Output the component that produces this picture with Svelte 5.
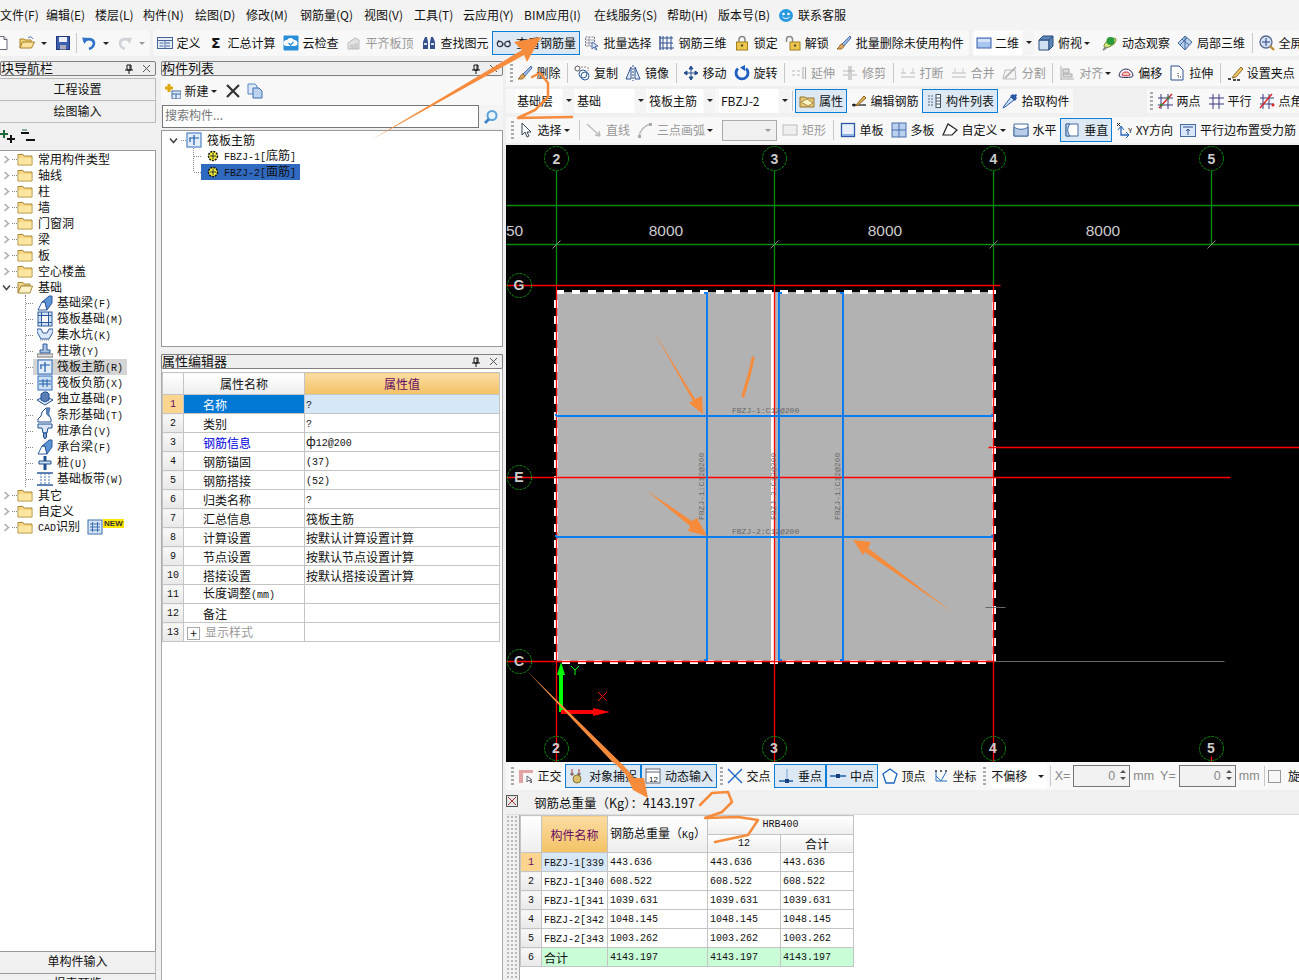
<script>
const I = {
  doc:'<path d="M3 1.500h7l3 3v10H3z" fill="#fff" stroke="#667"/><path d="M10 1.500v3h3" fill="#dde" stroke="#667"/>',
  open:'<path d="M1 13V4h4l1 1h6v2" fill="#f4d47c" stroke="#a87f24"/><path d="M1 13l2.500-6h12l-3 6z" fill="#f9e39f" stroke="#a87f24"/><path d="M9 3c2-2 4-1 5 1" fill="none" stroke="#3a6db5"/>',
  save:'<rect x="1.500" y="1.500" width="13" height="13" fill="#3b5fb0" stroke="#23397a"/><rect x="4" y="2" width="8" height="5" fill="#eef"/><rect x="5" y="10" width="6" height="4.500" fill="#aab"/>',
  undo:'<path d="M3 7c2-4 9-4 10 1 0 3-2 5-5 6" fill="none" stroke="#2f74c8" stroke-width="2.600"/><path d="M1 2.500l6 .5-3.500 6z" fill="#2f74c8"/>',
  redo:'<path d="M13 7C11 3 4 3 3 8c0 3 2 5 5 6" fill="none" stroke="#d0d4d8" stroke-width="2.600"/><path d="M15 2.500l-6 .5 3.500 6z" fill="#d0d4d8"/>',
  define:'<rect x=".5" y="2.500" width="15" height="11" fill="#e6eefa" stroke="#46639a"/><path d="M.5 5.500h15M2.500 8h4M2.500 11h4M9 8h4M9 11h4M8 5.500v8" stroke="#46639a" fill="none"/>',
  sigma:'<text x="3" y="13" font-size="14" font-weight="700" fill="#111" font-family="DejaVu Sans">Σ</text>',
  cloud:'<rect x=".5" y=".5" width="15" height="15" rx="1" fill="#2a8fd8"/><path d="M3 11a3 3 0 0 1 1-6 4 4 0 0 1 7 0 3 3 0 0 1 1 6z" fill="#fff"/><path d="M5.500 8l2 2 3-3" fill="none" stroke="#2a8fd8" stroke-width="1.300"/>',
  flat:'<path d="M2 14V8l7-5 4 2v9z" fill="#e2e2e2" stroke="#bbb"/><path d="M5 14v-4h2v4M9 14V9h2v5" stroke="#bbb" fill="none"/>',
  binoc:'<path d="M2 14V7l2-5h2l1 5v7zM14 14V7l-2-5h-2L9 7v7z" fill="#36508c"/><path d="M3 9h3M10 9h3" stroke="#cfdcf2" stroke-width="2"/>',
  glasses:'<circle cx="4" cy="9" r="2.700" fill="none" stroke="#334" stroke-width="1.200"/><circle cx="11.500" cy="9" r="2.700" fill="none" stroke="#334" stroke-width="1.200"/><path d="M6.700 9h2M1 8l2-3M14 8l-1-3" stroke="#334" fill="none"/>',
  batch:'<path d="M1.500 2h9v9h-9z" fill="#fff" stroke="#778" stroke-dasharray="2 1"/><path d="M1.500 5h9M1.500 8h9M5 2v9" stroke="#99a" fill="none"/><path d="M8 7l6 4-3 .5 2 3-1 .5-2-3-2 2z" fill="#dfe9f7" stroke="#4a6ea8"/>',
  r3d:'<path d="M1 3h13M1 8h13M2 13h13M4 1v14M8 1v14M12 1v14" stroke="#2f4f8f" fill="none"/><path d="M1 1v14" stroke="#2f4f8f" stroke-width="1.400"/>',
  lock:'<path d="M5 7V4.500a3 3 0 0 1 6 0V7" fill="none" stroke="#888" stroke-width="1.500"/><rect x="2.500" y="7" width="11" height="8" fill="#eec64e" stroke="#a0801e"/><circle cx="8" cy="10.500" r="1.200" fill="#553"/>',
  unlock:'<path d="M1.500 7V4.500a3 3 0 0 1 6 0V7" fill="none" stroke="#888" stroke-width="1.500"/><rect x="5" y="7" width="10" height="8" fill="#eec64e" stroke="#a0801e"/><circle cx="10" cy="10.500" r="1.200" fill="#553"/>',
  brush:'<path d="M14 1L6 9l2 2 7-8z" fill="#9fb8e8" stroke="#4a6ea8"/><path d="M6 9c-2 0-2 2-3 3l-2 2h4c2-1 3-2 3-3z" fill="#e0a35c" stroke="#9a6a2a"/>',
  v2d:'<rect x="1" y="3" width="14" height="10" fill="#a8c4f0" stroke="#3860a8"/><rect x="2" y="4" width="12" height="3" fill="#d4e2f8"/>',
  cube:'<path d="M1 5h10v10H1z" fill="#cfe0f2" stroke="#2a4a7a"/><path d="M1 5l4-4h10l-4 4zM11 5l4-4v10l-4 4z" fill="#5e88bc" stroke="#2a4a7a"/>',
  orbit:'<ellipse cx="8" cy="8" rx="7" ry="3" transform="rotate(-35 8 8)" fill="#dbe87c" stroke="#6a8a20"/><circle cx="8.500" cy="6" r="4" fill="#2a9a3a"/><path d="M1 15l4-3" stroke="#888" stroke-width="2"/>',
  part:'<path d="M8 1l7 6-7 8-7-7z" fill="#b8d0ee" stroke="#456a9c"/><path d="M5 4l7 6M10 3L3 10M8 1v14" stroke="#456a9c" fill="none"/>',
  zoomall:'<circle cx="7" cy="7" r="6" fill="#d6e2f4" stroke="#56688a" stroke-width="1.300"/><path d="M7 3v8M3 7h8" stroke="#24418a"/><path d="M11 11l4 4" stroke="#c09030" stroke-width="2.400"/>',
  copy:'<circle cx="3.500" cy="3.500" r="2.500" fill="none" stroke="#555"/><circle cx="11" cy="11" r="4" fill="none" stroke="#2f5f9f"/><circle cx="9" cy="9" r="4" fill="none" stroke="#2f5f9f"/><path d="M7 2h5M14 2v4" stroke="#888" fill="none" stroke-dasharray="2 1"/>',
  mirror:'<path d="M6 2v12H1zM10 2v12h5z" fill="#e3edf9" stroke="#2f5090"/><path d="M8 0v16" stroke="#2f5090" stroke-dasharray="2 1"/>',
  move:'<path d="M8 1v14M1 8h14M8 1L6 4h4zM8 15l-2-3h4zM1 8l3-2v4zM15 8l-3-2v4z" fill="#27508f" stroke="#27508f"/>',
  rotate:'<path d="M4 3.500a6 6 0 1 0 8 0" fill="none" stroke="#1f5fc4" stroke-width="2.800"/><path d="M8 0v6L3 2.500z" fill="#1f5fc4" transform="translate(3 0)"/>',
  extend:'<path d="M1 6h3M1 10h3M6 6h3M6 10h3" stroke="#bbb" fill="none"/><path d="M12 2v12M14.500 2v12" stroke="#aaa" fill="none"/>',
  trim:'<path d="M1 6h12M1 10h5M10 10h5" stroke="#bbb" fill="none"/><path d="M7 1v14M9 1v14" stroke="#aaa" fill="none"/>',
  brk:'<path d="M1 8h5M10 8h5M1 12h14" stroke="#bbb" fill="none"/><path d="M3 3v5M13 3v5" stroke="#ccc"/>',
  merge:'<path d="M1 8h14M1 12h14" stroke="#bbb" fill="none"/><path d="M4 3v5M12 3v5" stroke="#ccc"/>',
  split:'<path d="M1 14h13L13 5H3z" fill="#f4f4f4" stroke="#bbb"/><path d="M3 13l11-11" stroke="#aaa" stroke-width="1.500"/>',
  alignl:'<path d="M2 1v14M2 14h13" stroke="#aaa" fill="none"/><rect x="4" y="4" width="6" height="4" fill="#ddd" stroke="#aaa"/><rect x="4" y="9" width="9" height="3" fill="#ddd" stroke="#aaa"/>',
  offset:'<path d="M1 11a7 7 0 0 1 14 0c0 2-14 2-14 0z" fill="#eef" stroke="#335"/><path d="M4 10c0-4 8-4 8 0 0 1-8 1-8 0z" fill="#f6c8c0" stroke="#c33"/>',
  stretch:'<path d="M2 1h8l4 4v10H2z" fill="#fff" stroke="#2f4f8f"/><path d="M9 8v4h3" stroke="#333" stroke-dasharray="1 1" fill="none"/>',
  pencil:'<path d="M14 2L7 10l-2 3 4-1 7-8z" fill="#f2c66a" stroke="#8a6a22"/><path d="M1 14h3M6 15h3M10 15h3" stroke="#111" stroke-width="1.500"/>',
  prop:'<path d="M1 4h5l1 1h8v9H1z" fill="#e5c778" stroke="#94752a"/><path d="M2 9l6-3 6 4-5 3z" fill="#fff3c8" stroke="#a8904a"/>',
  edit:'<path d="M1 12h14" stroke="#222" stroke-width="1.300"/><path d="M5 12l8-9 2 2-9 8z" fill="#e4b65a" stroke="#8a6020"/><circle cx="3" cy="12" r="1.500" fill="#222"/>',
  list:'<rect x="10" y="1.500" width="4.500" height="13" fill="#fff" stroke="#456"/><path d="M10 5h4.500M10 8h4.500M10 11h4.500" stroke="#456"/><path d="M2 3h5M2 6h5M2 9h5M2 12h5" stroke="#567" stroke-dasharray="2 1"/>',
  drop:'<path d="M9 4l-7 9-1 2 2-1 9-7z" fill="#cfe2fb" stroke="#2a58a8"/><path d="M8 3l5 5 2-3-1-1 1-2-1-1-2 1-1-1z" fill="#2a58a8"/>',
  twop:'<path d="M4 1v15M11 1v15M1 5h15M1 12h15" stroke="#3b3b82" fill="none"/><path d="M2 15L15 1" stroke="#c22" stroke-width="1.300"/><circle cx="4.500" cy="12" r="1.500" fill="#3a8a3a"/><circle cx="11" cy="5" r="1.500" fill="#3a8a3a"/>',
  para:'<path d="M5 1v15M11 1v15M1 5h15M1 11h15" stroke="#3b3b82" fill="none"/>',
  pang:'<path d="M4 1v15M10 1v15M1 5h14M1 11h14" stroke="#3b3b82" fill="none"/><path d="M1 15L13 1" stroke="#d22" stroke-width="1.400"/><circle cx="14" cy="12" r="1.500" fill="#d22"/>',
  cursor:'<path d="M4 1v12l3-3 2 5 2-1-2-4h4z" fill="#fff" stroke="#345"/>',
  line:'<path d="M1 2l13 12M14 14l-5-1M14 14l-1-5" stroke="#bbb" stroke-width="1.300" fill="none"/>',
  arc:'<path d="M2 15C3 8 7 4 13 2" stroke="#bbb" stroke-width="1.500" fill="none"/><rect x="1" y="13" width="3" height="3" fill="#aaa"/><rect x="12" y="1" width="3" height="3" fill="#aaa"/>',
  rect:'<rect x="1" y="3" width="14" height="10" fill="#eee" stroke="#bbb"/>',
  single:'<rect x="1.500" y="1.500" width="13" height="13" fill="#e8f0fb" stroke="#2c59a6" stroke-width="1.300"/><path d="M2 13h12" stroke="#8fb2e6" stroke-width="2"/>',
  multi:'<rect x="1" y="1" width="14" height="14" fill="#b9d0ee" stroke="#4a71ac"/><path d="M8 1v14M1 8h14" stroke="#4a71ac"/>',
  custom:'<path d="M1 13L6 2l9 6-5 5z" fill="#fff" stroke="#222" stroke-width="1.200"/>',
  horiz:'<path d="M1 2h14v12H1z" fill="#fff" stroke="#456c9f"/><path d="M1 5c4 3 10 3 14 0v9H1z" fill="#b7cdea" stroke="#456c9f"/>',
  vert:'<path d="M2 2h12v12H2z" fill="#fff" stroke="#456c9f"/><path d="M6 2c-3 4-3 8 0 12H2V2z" fill="#b7cdea" stroke="#456c9f"/>',
  xy:'<path d="M5 5v8h7" stroke="#2763b8" stroke-width="1.300" fill="none"/><path d="M2 8l3-4 3 4M10 10l3 3-3 3" stroke="#2763b8" fill="none"/><path d="M1 1l3 3M4 1L1 4" stroke="#222"/><text x="12" y="11" font-size="7" font-family="Liberation Sans">Y</text>',
  edge:'<rect x=".5" y="2.500" width="15" height="12" fill="#dbe6f6" stroke="#456c9f"/><path d="M3 5h10M8 13V7M6 9l2-2 2 2" stroke="#2f4f8f" fill="none"/>',
  ortho:'<path d="M1 2h14v3H5v10H1z" fill="#e1a3a3"/><path d="M9 8v6l2-2 2 3 1-1-2-2h2z" fill="#fff" stroke="#667"/>',
  snap:'<path d="M3 1v7M10 1v7" stroke="#a33"/><circle cx="8" cy="11" r="4" fill="#d8bd6a" stroke="#8a7430"/><path d="M1 6h4M8 6h4" stroke="#555"/>',
  dyn:'<rect x="1" y="1" width="14" height="14" fill="#fff" stroke="#667"/><path d="M1 4h14" stroke="#667"/><text x="4" y="14" font-size="8" fill="#111" font-family="Liberation Sans">12</text>',
  cross:'<path d="M1 1l14 14M15 1L1 15" stroke="#1c66c0" stroke-width="1.400"/>',
  perp:'<path d="M1 13h14" stroke="#1b5dab" stroke-width="1.500"/><path d="M9 1v12" stroke="#7aa6d8"/><rect x="7" y="11" width="4" height="4" fill="#1b3f80"/>',
  mid:'<path d="M0 8h16" stroke="#1b5dab" stroke-width="1.500"/><rect x="6" y="6" width="4" height="4" fill="#1b3f80"/>',
  vertex:'<path d="M8 1l7 5-3 9H4L1 6z" fill="#fff" stroke="#1c66c0" stroke-width="1.300"/>',
  coord:'<path d="M3 13h11M3 13V3M3 8l5 5 5-9" stroke="#2673c8" fill="none"/><circle cx="13" cy="3" r="1" fill="#333"/><circle cx="3" cy="3" r="1" fill="#333"/><circle cx="8" cy="3" r="1" fill="#333"/>',
  add:'<path d="M4 1v8M0 5h8" stroke="#dca90e" stroke-width="3"/><rect x="7" y="8" width="9" height="8" fill="#dce8f7" stroke="#456c9f"/><path d="M7 11h9M11 11v5" stroke="#456c9f"/>',
  x:'<path d="M2 2l12 12M14 2L2 14" stroke="#333" stroke-width="2.200"/>',
  cp:'<path d="M1 1h7l2 2v8H1z" fill="#dbe8f8" stroke="#5b86c4"/><path d="M6 5h6l3 3v7H6z" fill="#bcd3f0" stroke="#3d6cb2"/>',
  search:'<circle cx="9" cy="6.500" r="4.500" fill="#eaf4fd" stroke="#5aa3dd" stroke-width="2"/><path d="M6 10l-4 4" stroke="#3a85c9" stroke-width="2.600"/>',
  qq:'<ellipse cx="8" cy="8.500" rx="7" ry="6.500" fill="#2a9ae0"/><circle cx="5.500" cy="7" r="1.300" fill="#fff"/><circle cx="10.500" cy="7" r="1.300" fill="#fff"/><path d="M4.500 10c2 2 5 2 7 0" stroke="#fff" fill="none"/>',
  plus:'<path d="M4 1v8M0 5h8" stroke="#1d6b3d" stroke-width="2"/><path d="M11 6v8M7 10h8" stroke="#111" stroke-width="2"/>',
  minus:'<path d="M1 4h8M6 11h9" stroke="#111" stroke-width="2"/><path d="M2 1h5" stroke="#1d6b3d"/>',
  folder:'<path d="M1 3.500h5l1 1.500h8v9H1z" fill="#f6d67e" stroke="#a88a3c"/><path d="M1.500 7h13v6.500h-13z" fill="#fbe5a0"/>',
  folderO:'<path d="M1 3.500h5l1 1.500h6v2H4L1 14z" fill="#f0d58c" stroke="#a88a3c"/><path d="M4 7h11.500L13 14H1z" fill="#fdf0c4" stroke="#a88a3c"/>',
  beam:'<path d="M1 15l4-8h3l2 8z" fill="#fff" stroke="#2c5a9c"/><path d="M5 7l7-6h3v7l-5 7-2-8z" fill="#5b92d3" stroke="#2c5a9c"/>',
  raft:'<rect x="1" y="1" width="14" height="14" fill="#cfe0f5" stroke="#2c5a9c"/><rect x="4.500" y="4.500" width="7" height="7" fill="#fff" stroke="#2c5a9c"/><path d="M1 4.500h14M1 11.500h14M4.500 1v14M11.500 1v14" stroke="#2c5a9c"/>',
  pit:'<path d="M0 2h4l2 4h4l2-4h4v3l-4 7H4L0 5z" fill="#d8e6f7" stroke="#2c5a9c"/><path d="M3 13h10" stroke="#888" stroke-dasharray="1 1"/>',
  pier:'<path d="M6 1h4v6h3v3H3V7h3z" fill="#a9c1e2" stroke="#2c5a9c"/><path d="M0 11h16v3H0z" fill="#e6e6e6" stroke="#777"/>',
  main:'<rect x="1" y="1" width="14" height="14" fill="#e4eefb" stroke="#2e6dbb"/><path d="M3 6h10M8 3v10M4 6v4" stroke="#1c5cab" stroke-width="1.200" fill="none"/>',
  neg:'<rect x="1" y="1" width="14" height="14" fill="#cfe0f5" stroke="#2e6dbb"/><path d="M2 6h12M2 9h12M6 4v8M10 4v8" stroke="#1c5cab" fill="none"/>',
  found:'<path d="M0 9l8-4 8 4-8 5z" fill="#e1ecfa" stroke="#1e4f90"/><path d="M4 9V3l3-2h3l2 2v6l-4 2z" fill="#587fb6" stroke="#1e4f90"/>',
  strip:'<path d="M1 15v-3l3-3 1-4 4-4h4l-2 5 3 6v3z" fill="#fff" stroke="#1e4f90"/><path d="M9 1h4l-1 9-3-3z" fill="#587fb6"/>',
  cap:'<path d="M1 1h14v4H11l-1 5H6L5 5H1z" fill="#d9e5f5" stroke="#1e4f90"/><path d="M6.500 10h3v4l-1.500 2-1.500-2z" fill="#7a9cc8" stroke="#1e4f90"/>',
  pile:'<path d="M8 1v14" stroke="#1e4f90" stroke-width="3"/><path d="M2 6h12v3H2z" fill="#cfe0f5" stroke="#1e4f90"/>',
  strap:'<path d="M0 2h16M0 14h16" stroke="#2c5a9c" stroke-width="1.400"/><path d="M4 2v12M8 2v12M12 2v12" stroke="#4a7cc0" stroke-dasharray="2 1"/>',
  gear:'<circle cx="8" cy="8" r="4.500" fill="#f4ef3a" stroke="#111" stroke-width="1.500" stroke-dasharray="2 1"/><path d="M5 8h6M8 5v6" stroke="#333"/>',
  cadb:'<rect x="1" y="1" width="14" height="14" fill="#d5e4f7" stroke="#3d6fae"/><path d="M5.500 3v10M10.500 3v10M3 5h10M3 8h10M3 11h10" stroke="#3d6fae"/>'
};

const menus = [['文件(F)',36],['编辑(E)',39],['楼层(L)',38],['构件(N)',42],['绘图(D)',41],['修改(M)',44],['钢筋量(Q)',54],['视图(V)',40],['工具(T)',39],['云应用(Y)',51],['BIM应用(I)',60],['在线服务(S)',63],['帮助(H)',41],['版本号(B)',52]];

const S = {sep:true}, G = {grip:true};
const row1b = [
  {i:'define',t:'定义'},{i:'sigma',t:'汇总计算'},{i:'cloud',t:'云检查'},{i:'flat',t:'平齐板顶',d:1},{i:'binoc',t:'查找图元'},
  {i:'glasses',t:'查看钢筋量',a:1},{i:'batch',t:'批量选择'},{i:'r3d',t:'钢筋三维'},{i:'lock',t:'锁定'},{i:'unlock',t:'解锁'},{i:'brush',t:'批量删除未使用构件'}
];
const row1c = [
  {i:'cube',t:'俯视',c:1,x:1},{i:'orbit',t:'动态观察'},{i:'part',t:'局部三维'},S,{i:'zoomall',t:'全屏'}
];
const row2 = [
  G,{i:'brush',t:'删除'},S,{i:'copy',t:'复制'},{i:'mirror',t:'镜像'},S,{i:'move',t:'移动'},{i:'rotate',t:'旋转'},S,
  {i:'extend',t:'延伸',d:1},{i:'trim',t:'修剪',d:1},S,{i:'brk',t:'打断',d:1},{i:'merge',t:'合并',d:1},{i:'split',t:'分割',d:1},S,
  {i:'alignl',t:'对齐',d:1,c:1},{i:'offset',t:'偏移'},{i:'stretch',t:'拉伸'},S,{i:'pencil',t:'设置夹点'}
];
const row3a = [{i:'prop',t:'属性',a:1},{i:'edit',t:'编辑钢筋'},{i:'list',t:'构件列表',a:1},{i:'drop',t:'拾取构件'}];
const row3b = [G,{i:'twop',t:'两点'},{i:'para',t:'平行'},{i:'pang',t:'点角'}];
const row4a = [G,{i:'cursor',t:'选择',c:1,x:1},S,{i:'line',t:'直线',d:1},{i:'arc',t:'三点画弧',d:1,c:1}];
const row4b = [{i:'rect',t:'矩形',d:1},S,{i:'single',t:'单板'},{i:'multi',t:'多板'},{i:'custom',t:'自定义',c:1},{i:'horiz',t:'水平'},{i:'vert',t:'垂直',a:1},{i:'xy',t:'XY方向'},{i:'edge',t:'平行边布置受力筋'}];
const snapA = [G,{i:'ortho',t:'正交'},{i:'snap',t:'对象捕捉',a:1},{i:'dyn',t:'动态输入',a:1},G,{i:'cross',t:'交点'},{i:'perp',t:'垂点',a:1},{i:'mid',t:'中点',a:1},{i:'vertex',t:'顶点'},{i:'coord',t:'坐标'},G];
const combos = [{t:'基础层',w:47},{t:'基础',w:59},{t:'筏板主筋',w:56},{t:'FBZJ-2',w:59}];

const top1 = ['常用构件类型','轴线','柱','墙','门窗洞','梁','板','空心楼盖'];
const kids = [['beam','基础梁(F)'],['raft','筏板基础(M)'],['pit','集水坑(K)'],['pier','柱墩(Y)'],['main','筏板主筋(R)'],['neg','筏板负筋(X)'],['found','独立基础(P)'],['strip','条形基础(T)'],['cap','桩承台(V)'],['beam','承台梁(F)'],['pile','桩(U)'],['strap','基础板带(W)']];

const props = [
  ['名称','?'],['类别','?'],['钢筋信息','ф12@200'],['钢筋锚固','(37)'],['钢筋搭接','(52)'],['归类名称','?'],['汇总信息','筏板主筋'],
  ['计算设置','按默认计算设置计算'],['节点设置','按默认节点设置计算'],['搭接设置','按默认搭接设置计算'],['长度调整(mm)',''],['备注',''],['显示样式','']
];
const weights = [
  ['FBZJ-1[339','443.636'],['FBZJ-1[340','608.522'],['FBZJ-1[341','1039.631'],['FBZJ-2[342','1048.145'],['FBZJ-2[343','1003.262'],['合计','4143.197']
];
const runs = s => s.match(/[\x20-\x7e]+|[^\x20-\x7e]+/g) || [];
const isA = r => /^[\x20-\x7e]/.test(r);

const axes = [[556,'2'],[774,'3'],[993,'4'],[1211,'5']];
const dims = [[666,'8000'],[885,'8000'],[1103,'8000']];
</script>

{#snippet ic(n)}<svg class="ic" width="16" height="16" viewBox="0 0 16 16">{@html I[n]}</svg>{/snippet}
{#snippet caret()}<span class="caret"></span>{/snippet}
{#snippet mix(t)}{#each runs(t) as r}{#if isA(r)}<span class="m">{r}</span>{:else}{r}{/if}{/each}{/snippet}
{#snippet tools(list)}
  {#each list as it}
    {#if it.sep}<span class="sep"></span>
    {:else if it.grip}<span class="grip"></span>
    {:else}
      <span class="tool" class:dis={it.d} class:act={it.a} class:wide={it.x}>
        {@render ic(it.i)}<span>{it.t}</span>{#if it.c}{@render caret()}{/if}
      </span>
    {/if}
  {/each}
{/snippet}
{#snippet phead(title)}
  <div class="phead"><span class="ptitle">{title}</span>
    <svg class="pin" width="10" height="10" viewBox="0 0 10 10"><path d="M3 1h4v5H3zM1 6h8M5 6v4M6 1v5" stroke="#111" fill="none"/></svg>
    <svg class="close" width="9" height="9" viewBox="0 0 9 9"><path d="M1 1l7 7M8 1L1 8" stroke="#555" fill="none"/></svg>
  </div>
{/snippet}
{#snippet chev(open)}
  <svg class="chev" width="9" height="9" viewBox="0 0 9 9">
    {#if open}<path d="M1 2.500l3.500 4 3.500-4" stroke="#444" stroke-width="1.500" fill="none"/>
    {:else}<path d="M2.500 1l4 3.500-4 3.500" stroke="#aaa" stroke-width="1.500" fill="none"/>{/if}
  </svg>
{/snippet}

<div class="app">
  <nav class="menu">
    {#each menus as m}<span style:width="{m[1]}px">{m[0]}</span>{/each}
    <span class="svc">{@render ic('qq')}联系客服</span>
  </nav>

  <div class="row1">
    <div class="bar first">
      <span class="plain lead">{@render ic('doc')}</span>
      <span class="plain">{@render ic('open')}{@render caret()}</span>
      <span class="plain sv">{@render ic('save')}</span>
      <span class="sep"></span>
      <span class="plain un">{@render ic('undo')}{@render caret()}</span>
      <span class="plain">{@render ic('redo')}<span class="caret lite"></span></span>
    </div>
    <div class="bar second">{@render tools(row1b)}</div>
    <div class="bar third">
      <span class="combo c2d">{@render ic('v2d')}<span>二维</span><i class="arrowbox"></i></span>
      {@render tools(row1c)}
    </div>
  </div>

  <div class="main">
    <aside class="left">
      {@render phead('模块导航栏')}
      <div class="navbtn first">工程设置</div>
      <div class="navbtn">绘图输入</div>
      <div class="treebar">
        <svg width="16" height="16" viewBox="0 0 16 16">{@html I.plus}</svg>
        <svg width="16" height="16" viewBox="0 0 16 16">{@html I.minus}</svg>
      </div>
      <div class="tree">
        {#each top1 as t}
          <div class="tr">{@render chev(false)}<i class="dot"></i>{@render ic('folder')}<span class="tt">{t}</span></div>
        {/each}
        <div class="tr">{@render chev(true)}<i class="dot"></i>{@render ic('folderO')}<span class="tt">基础</span></div>
        <div class="kids">
          {#each kids as k}
            <div class="kr"><i class="dot2"></i><span class="kw" class:sel={k[1]==='筏板主筋(R)'}>{@render ic(k[0])}<span>{@render mix(k[1])}</span></span></div>
          {/each}
        </div>
        {#each ['其它','自定义'] as t}
          <div class="tr">{@render chev(false)}<i class="dot"></i>{@render ic('folder')}<span class="tt">{t}</span></div>
        {/each}
        <div class="tr">{@render chev(false)}<i class="dot"></i>{@render ic('folder')}<span class="tt">{@render mix('CAD识别')}</span>{@render ic('cadb')}<span class="newb">NEW</span></div>
      </div>
      <div class="navbtn bottom">单构件输入</div>
      <div class="navbtn bottom">报表预览</div>
    </aside>

    <section class="mid">
      {@render phead('构件列表')}
      <div class="midbar">
        <span class="tool">{@render ic('add')}<span>新建</span>{@render caret()}</span>
        <span class="plain mx">{@render ic('x')}</span>
        <span class="plain">{@render ic('cp')}</span>
      </div>
      <div class="searchrow"><div class="search">搜索构件...</div><span class="sicon">{@render ic('search')}</span></div>
      <div class="comp">
        <div class="cr top">{@render chev(true)}<i class="dot sm"></i>{@render ic('main')}<span class="tt">筏板主筋</span></div>
        <div class="compkids">
          <div class="cr"><i class="dot2"></i><span class="cw">{@render ic('gear')}<span>{@render mix('FBZJ-1[底筋]')}</span></span></div>
          <div class="cr"><i class="dot2"></i><span class="cw on">{@render ic('gear')}<span>{@render mix('FBZJ-2[面筋]')}</span></span></div>
        </div>
      </div>
      <div class="propwrap">
        {@render phead('属性编辑器')}
        <table class="ptable">
          <colgroup><col class="c0"><col class="c1"><col class="c2"></colgroup>
          <thead><tr><th></th><th>属性名称</th><th class="orange">属性值</th></tr></thead>
          <tbody>
            {#each props as p, n}
              <tr class:first={n===0}>
                <td class="no">{n+1}</td>
                <td class="nm" class:blue={n===2} class:grey={n===12}>{#if n===12}<span class="exp">+</span>{/if}{@render mix(p[0])}</td>
                <td class="vl">{@render mix(p[1])}</td>
              </tr>
            {/each}
          </tbody>
        </table>
      </div>
    </section>

    <section class="right">
      <div class="tb r2">{@render tools(row2)}</div>
      <div class="tb r3">
        <div class="grp">
          {#each combos as c}
            <span class="combo" style:width="{c.w}px"><span class="ctext">{c.t}</span><i class="arrowbox"></i></span>
          {/each}
          <span class="sep"></span>
          {@render tools(row3a)}
        </div>
        <div class="grp g2">{@render tools(row3b)}</div>
      </div>
      <div class="tb r4">
        {@render tools(row4a)}
        <span class="blank"><span class="caret grey"></span></span>
        {@render tools(row4b)}
      </div>

      <svg class="cad" width="793" height="617" viewBox="506 145 793 617">
        <rect x="506" y="145" width="793" height="617" fill="#000"/>
        <g transform="translate(.5 .5)" stroke-width="1.300">
          <path d="M506 205H1299M506 244H1299" stroke="#0a8a0a"/>
          {#each axes as a}
            <path d="M{a[0]} 170V{a[0]===1211?244:285}" stroke="#0a8a0a"/>
            <path d="M{a[0]-4} 248l8-8" stroke="#888" stroke-width="1"/>
            <circle cx={a[0]} cy="158" r="12" fill="#000" stroke="#0a8a0a" stroke-width="1" stroke-dasharray="3 1"/>
            <text class="bub" x={a[0]} y="163" text-anchor="middle">{a[1]}</text>
          {/each}
        </g>
        {#each dims as d}<text class="dim" x={d[0]} y="236" text-anchor="middle">{d[1]}</text>{/each}
        <text class="dim" x="506" y="236">50</text>

        <rect x="556" y="292" width="438" height="370" fill="#b2b2b2"/>
        <rect x="556" y="292" width="438" height="370" fill="none" stroke="#fff" stroke-width="4" stroke-dasharray="8 8"/>
        <path d="M773 292V662" stroke="#fff" stroke-width="4"/>

        <g transform="translate(.5 .5)" stroke-width="1.300">
          <path d="M506 285H1000M506 477H1230M506 661H994" stroke="#f00"/>
          <path d="M556 285V762M774 285V762M993 285V762M1211 756V762M988 447H1299" stroke="#f00"/>
          <path d="M994 661H1224M985 607H1005" stroke="#666" stroke-width="1"/>
        </g>

        <path d="M707 292V661M779 292V661M843 292V661M556 416H993M556 537H993" stroke="#0a7cf0" stroke-width="2"/>
        <path d="M704 293H707M779 293H782M840 293H843M704 660H707M779 660H782M840 660H843M556 414V416M992 414V416M556 535V537M992 535V537" stroke="#0a7cf0" stroke-width="2"/>

        <text class="lab" x="732" y="413">FBZJ-1:C12@200</text>
        <text class="lab" x="732" y="534">FBZJ-2:C12@200</text>
        <text class="lab" transform="translate(704 520) rotate(-90)">FBZJ-1:C12@200</text>
        <text class="lab" transform="translate(776 520) rotate(-90)">FBZJ-2:C12@200</text>
        <text class="lab" transform="translate(840 520) rotate(-90)">FBZJ-1:C12@200</text>

        {#each [['G',285],['E',477],['C',661]] as g}
          <circle cx="519.500" cy={g[1]+.5} r="12" fill="none" stroke="#0a8a0a" stroke-dasharray="3 1"/>
          <text class="bub" x="519" y={g[1]+5} text-anchor="middle">{g[0]}</text>
        {/each}
        {#each axes as a}
          <circle cx={a[0]+.5} cy="748.500" r="12" fill="none" stroke="#0a8a0a" stroke-dasharray="3 1"/>
          <text class="bub" x={a[0]} y="753" text-anchor="middle">{a[1]}</text>
        {/each}

        <path d="M561 712V672" stroke="#0f0" stroke-width="4"/><path d="M561 662l-4 13h8z" fill="#0f0"/>
        <path d="M561 712H600" stroke="#f00" stroke-width="4"/><path d="M610 712l-17-4v8z" fill="#f00"/>
        <path d="M571 666l4 4 4-4M575 670v5" stroke="#0f0" fill="none"/>
        <path d="M598 692l9 9M607 692l-9 9" stroke="#f00"/>
      </svg>

      <div class="tb snap">
        {@render tools(snapA)}
        <span class="blank w"><span class="txt">不偏移</span><span class="caret"></span></span>
        <span class="sep"></span>
        <span class="lbl">X=</span>
        <span class="spin"><span>0</span><i></i></span>
        <span class="lbl">mm</span>
        <span class="lbl l2">Y=</span>
        <span class="spin"><span>0</span><i></i></span>
        <span class="lbl">mm</span>
        <span class="sep"></span>
        <span class="chk"></span>
        <span class="rot">旋转点</span>
      </div>

      <div class="bottom-panel">
        <div class="wtitle"><svg width="12" height="12" viewBox="0 0 12 12"><rect x=".5" y=".5" width="11" height="11" fill="#e6e6e6" stroke="#555"/><path d="M2 2l8 8M10 2L2 10" stroke="#a33"/></svg><span>钢筋总重量（Kg）：4143.197</span></div>
        <div class="wbody">
          <div class="dots"></div>
          <table class="wtable">
            <colgroup><col class="w0"><col class="w1"><col class="w2"><col class="w3"><col class="w4"></colgroup>
            <thead>
              <tr><th rowspan="2"></th><th rowspan="2" class="orange">构件名称</th><th rowspan="2" class="tl">钢筋总重量（<span class="m">Kg</span>）</th><th colspan="2" class="m">HRB400</th></tr>
              <tr><th class="m">12</th><th>合计</th></tr>
            </thead>
            <tbody>
              {#each weights as w, n}
                <tr class:total={n===5} class:first={n===0}>
                  <td class="no">{n+1}</td><td class="nmw">{@render mix(w[0])}</td>
                  <td class="num">{w[1]}</td><td class="num">{w[1]}</td><td class="num">{w[1]}</td>
                </tr>
              {/each}
            </tbody>
          </table>
        </div>
      </div>
    </section>
  </div>

  <svg class="notes" width="1299" height="980" viewBox="0 0 1299 980">
    <g fill="#f68b3c">
      <path d="M371 140L522 50 514 42 541 37 527 62 524 55z"/>
      <path d="M653 330L695 399 702 396 703 414 689 403 693 401z"/>
      <path d="M646 490L692 521 697 518 707 536 688 531 690 526z"/>
      <path d="M952 612L868 548 871 542 853 540 863 555 865 552z"/>
      <path d="M528 672L618 768 612 760 626 775 633 790 648 798 644 778 634 778 625 767z"/>
    </g>
    <g fill="none" stroke="#f68b3c" stroke-linecap="round" stroke-linejoin="round">
      <path d="M753 358L750 372 743 396" stroke-width="3"/>
      <path d="M532 77L540 73 548 83 548 97 535 110 518 118 572 117" stroke-width="2.500"/>
      <path d="M700 805L712 793 728 792 732 802 722 812 705 818 738 817 758 820 748 835 715 842" stroke-width="2.500"/>
    </g>
  </svg>
</div>

<style>
  :global(body){margin:0;background:#f0f0f0}
  .app{position:relative;width:1299px;height:980px;overflow:hidden;background:#f0f0f0;color:#111;font:12px/16px "Noto Sans CJK SC","Liberation Sans",sans-serif;display:flex;flex-direction:column}
  .ic{flex:none;display:block}
  i{font-style:normal;display:block}
  .menu{height:30px;display:flex;align-items:center;gap:10px;white-space:nowrap;background:#f3f3f3;flex:none}
  .menu>span{flex:none}
  .svc{display:flex;align-items:center;gap:4px;margin-left:-2px}
  .row1{height:30px;display:flex;flex:none;gap:3px}
  .bar{display:flex;align-items:center;height:26px;background:#f8f8f8;border-radius:3px;white-space:nowrap}
  .first.bar{width:150px;flex:none;overflow:hidden}
  .second{width:816px;flex:none}
  .third{flex:1;overflow:hidden;padding-left:2px}
  .plain{display:flex;align-items:center;gap:6px;margin-right:8px}
  .plain .caret{margin-left:0}
  .plain.lead{margin-left:-6px;margin-right:9px}
  .plain.sv{margin-right:2px}
  .plain.un{margin-left:1px}
  .sep{width:1px;height:20px;background:#c8c8c8;margin:0 2.500px 0 3px;flex:none}
  .grip{width:3px;height:18px;margin:0 0 0 3px;background:repeating-linear-gradient(#aaa 0 2px,transparent 2px 4px);flex:none}
  .tool{display:flex;align-items:center;gap:4px;padding:0 3.500px;height:100%;flex:none;box-sizing:border-box}
  .tool.dis{color:#999}
  .tool.act{border:1px solid #0a7ed6;background:#dce9f5;height:24px;padding:0 3px}
  .tool.wide{margin-right:5px}
  .caret{display:inline-block;width:0;height:0;border:3px solid transparent;border-top:3.500px solid #222;border-bottom:0;margin-left:-2px;flex:none}
  .caret.lite,.caret.grey{border-top-color:#999}
  .combo{display:flex;align-items:center;background:#fff;height:24px;position:relative;flex:none}
  .ctext{padding-left:2px;white-space:nowrap;overflow:hidden}
  .arrowbox{position:absolute;right:-12px;top:0;width:11px;height:24px;background:#f4f4f4}
  .arrowbox::after{content:"";position:absolute;left:3px;top:10px;border:3px solid transparent;border-top:3.500px solid #222;border-bottom:0}
  .c2d{width:46px;padding-left:2px;margin-right:12.500px;gap:3px}
  .main{flex:1;display:flex;min-height:0}
  .left{width:156px;flex:none;display:flex;flex-direction:column;padding-top:1px;box-sizing:border-box}
  .phead{height:13px;border:1px solid #808080;border-radius:2px;background:#eee;display:flex;align-items:center;font-size:13px;line-height:12px;overflow:hidden;flex:none}
  .ptitle{flex:1;white-space:nowrap;margin-top:-2px}
  .left .ptitle{margin-left:-13px}
  .pin{margin-right:8px}
  .close{margin-right:4px}
  .navbtn{height:21px;line-height:19px;text-align:center;border:1px solid #bbb;border-width:1px 1px 0 0;background:#f0f0f0;flex:none}
  .navbtn.first{margin-top:2px}
  .treebar{height:27px;display:flex;align-items:center;gap:4px;border-top:1px solid #bbb;flex:none}
  .tree{height:801px;flex:none;box-sizing:border-box;background:#fff;border:1px solid #999;border-width:1px 1px 0 0}
  .navbtn.bottom{height:21px;line-height:18px;border-top:1px solid #999}
  .tr{height:16px;display:flex;align-items:center}
  .chev{margin-left:2px;flex:none;width:9px}
  .dot{width:5px;border-top:1px dotted #888;flex:none;margin-left:1px}
  .dot.sm{width:5px;margin-left:3px}
  .tt{margin-left:5px;white-space:nowrap}
  .kids{margin-left:25px;border-left:1px dotted #888;height:192px}
  .kr{height:16px;display:flex;align-items:center}
  .dot2{width:7px;border-top:1px dotted #888;flex:none}
  .kw{display:flex;align-items:center;gap:4px;padding-left:4px;width:90px;height:16px;white-space:nowrap}
  .kw.sel{background:#d4d4d4}
  .m{font-family:"Liberation Mono",monospace;font-size:10px}
  .newb{font:700 8px/9px "Liberation Sans",sans-serif;background:#ffe600;color:#333;align-self:flex-start;padding:0 1px}
  .tr .tt+.ic{margin-left:7px}
  .mid{width:342px;flex:none;margin-left:5px;padding-top:1px;display:flex;flex-direction:column;box-sizing:border-box}
  .midbar{height:28px;display:flex;align-items:center;background:#f8f8f8;flex:none;margin-top:1px;padding-left:0}
  .midbar .plain{margin-right:6px}
  .midbar .plain.mx{margin-left:5px}
  .searchrow{display:flex;height:23px;margin-left:1px;flex:none}
  .search{flex:1;border:1px solid #777;background:#fff;color:#777;padding-left:2px;line-height:18px}
  .sicon{width:24px;display:flex;align-items:center;justify-content:center;background:#f4f4f4}
  .comp{height:217px;background:#fff;border:1px solid #999;margin-top:2px;box-sizing:border-box;padding-top:1px;flex:none}
  .cr{height:16px;display:flex;align-items:center}
  .cr.top{padding-left:5px}
  .compkids{margin-left:31px;border-left:1px dotted #888;height:23px}
  .cw{display:flex;align-items:center;gap:3px;width:95px;padding-left:4px;height:16px;white-space:nowrap}
  .cw.on{background:#2f69c0}
  .propwrap{flex:1;background:#fff;margin-top:7px;border-right:1px solid #aaa;border-left:1px solid #aaa}
  .propwrap .phead{margin-left:-1px;margin-right:-1px}
  .ptable{border-collapse:collapse;table-layout:fixed;width:337px;margin-top:3px;background:#fff}
  .c0{width:21px}.c1{width:121px}.c2{width:195px}
  .ptable th,.ptable td{border:1px solid #c4c4c4;height:18px;line-height:13px;padding:0;overflow:hidden;white-space:nowrap}
  .ptable th{height:21px;background:linear-gradient(#fff,#eee);font-weight:400}
  .ptable th.orange,.wtable th.orange{background:linear-gradient(#fbdca3,#f3c264);color:#660a66}
  .no{background:linear-gradient(#f8f8f8,#e8e8e8);text-align:center;font-family:"Liberation Mono",monospace;font-size:10px}
  .ptable .nm{padding-left:19px}
  .ptable .vl{padding-left:1px}
  .first .no{background:#fbd490;color:#660a66}
  .ptable .first .nm{background:#0078d4;color:#fff}
  .ptable .first .vl{background:#d6e8f8}
  .blue{color:#0000e0}
  .grey{color:#999}
  .exp{display:inline-block;width:11px;height:11px;line-height:10px;border:1px solid #aaa;color:#111;text-align:center;margin:0 5px 0 -16px;vertical-align:-1px}
  .right{flex:1;display:flex;flex-direction:column;margin-left:3px;min-width:0}
  .tb{display:flex;align-items:center;white-space:nowrap;flex:none;overflow:hidden}
  .r2{height:26px;background:#f8f8f8;margin-bottom:3px;padding-left:1px}
  .r3{height:24px;margin-bottom:4px}
  .grp{display:flex;align-items:center;height:24px;background:#f8f8f8;padding-left:9px;width:567px;box-sizing:border-box;flex:none;overflow:hidden}
  .r3 .combo{margin-right:13px}
  .r3 .combo:nth-child(3){margin-right:16px}
  .r3 .combo:nth-child(4){margin-right:14px}
  .r3 .g2{margin-left:74px;flex:1;padding-left:0;width:auto}
  .r3 .sep{margin:0 2px 0 0}
  .r4{height:26px;background:#f8f8f8;margin-bottom:2px;padding-left:2px}
  .r4 .tool.wide{margin-right:3px}
  .blank{display:flex;align-items:center;justify-content:flex-end;width:55px;height:21px;border:1px solid #aaa;margin:0 1.500px 0 5.500px;padding-right:5px;box-sizing:border-box;flex:none;background:#f0f0f0}
  .cad{display:block;flex:none}
  .snap{height:28px;background:#f8f8f8;padding-left:2px}
  .snap .blank.w{background:#fff;border:0;width:56px;justify-content:space-between;padding:0 3px 0 0;margin:0 0 0 5px;height:24px}
  .snap .blank.w .caret{margin-left:0}
  .lbl{color:#888;margin:0 1px;font-family:"Liberation Sans",sans-serif;font-size:12.500px;flex:none}
  .l2{margin-left:5px}
  .spin{width:57px;height:22px;box-sizing:border-box;border:1px solid #777;background:#f2f2f2;color:#888;display:flex;align-items:center;justify-content:flex-end;margin:0 2px;padding-right:14px;position:relative;flex:none;font-family:"Liberation Sans",sans-serif;font-size:12.500px}
  .spin i{position:absolute;right:3px;top:4px;width:0;height:0;border:3px solid transparent;border-bottom:3px solid #555;border-top:0}
  .spin i::after{content:"";position:absolute;left:-3px;top:7px;border:3px solid transparent;border-top:3px solid #555;border-bottom:0}
  .chk{width:11px;height:11px;border:1px solid #999;flex:none;margin:0 7px 0 1px}
  .rot{flex:none}
  .bottom-panel{flex:1;background:#fff;display:flex;flex-direction:column;min-height:0}
  .wtitle{height:25px;box-sizing:border-box;display:flex;align-items:center;gap:16px;background:#f0f0f0;flex:none;font-size:12.500px;border-bottom:1px solid #ddd;padding-top:1px}
  .wtitle svg{margin-top:-4px;flex:none}
  .wbody{flex:1;display:flex;min-height:0}
  .dots{width:13px;background:#f0f0f0 radial-gradient(#bbb 1px,transparent 1px) 0 0/4px 4px;flex:none;border-right:1px solid #aaa}
  .wtable{border-collapse:collapse;table-layout:fixed;width:333px;align-self:flex-start}
  .w0{width:21px}.w1{width:66px}.w2{width:100px}.w3{width:73px}.w4{width:73px}
  .wtable th,.wtable td{border:1px solid #c4c4c4;padding:0;height:18px;line-height:13px;white-space:nowrap;overflow:hidden}
  .wtable th{background:linear-gradient(#fff,#eee);font-weight:400;height:17.500px}
  .wtable th.tl{text-align:left;padding-left:2px}
  .wtable .nmw{padding-left:2px}
  .wtable .num{font-family:"Liberation Mono",monospace;font-size:10px;padding-left:2px}
  .wtable .first .nmw{background:#d6e8f8}
  .total td:not(.no){background:#c9fdd7}
  .bub{font:700 14px "Liberation Sans",sans-serif;fill:#ccc}
  .dim{font:15.500px "Liberation Sans",sans-serif;fill:#ccc}
  .lab{font:8px "Liberation Mono",monospace;fill:#666}
  .notes{position:absolute;left:0;top:0;pointer-events:none}
</style>
